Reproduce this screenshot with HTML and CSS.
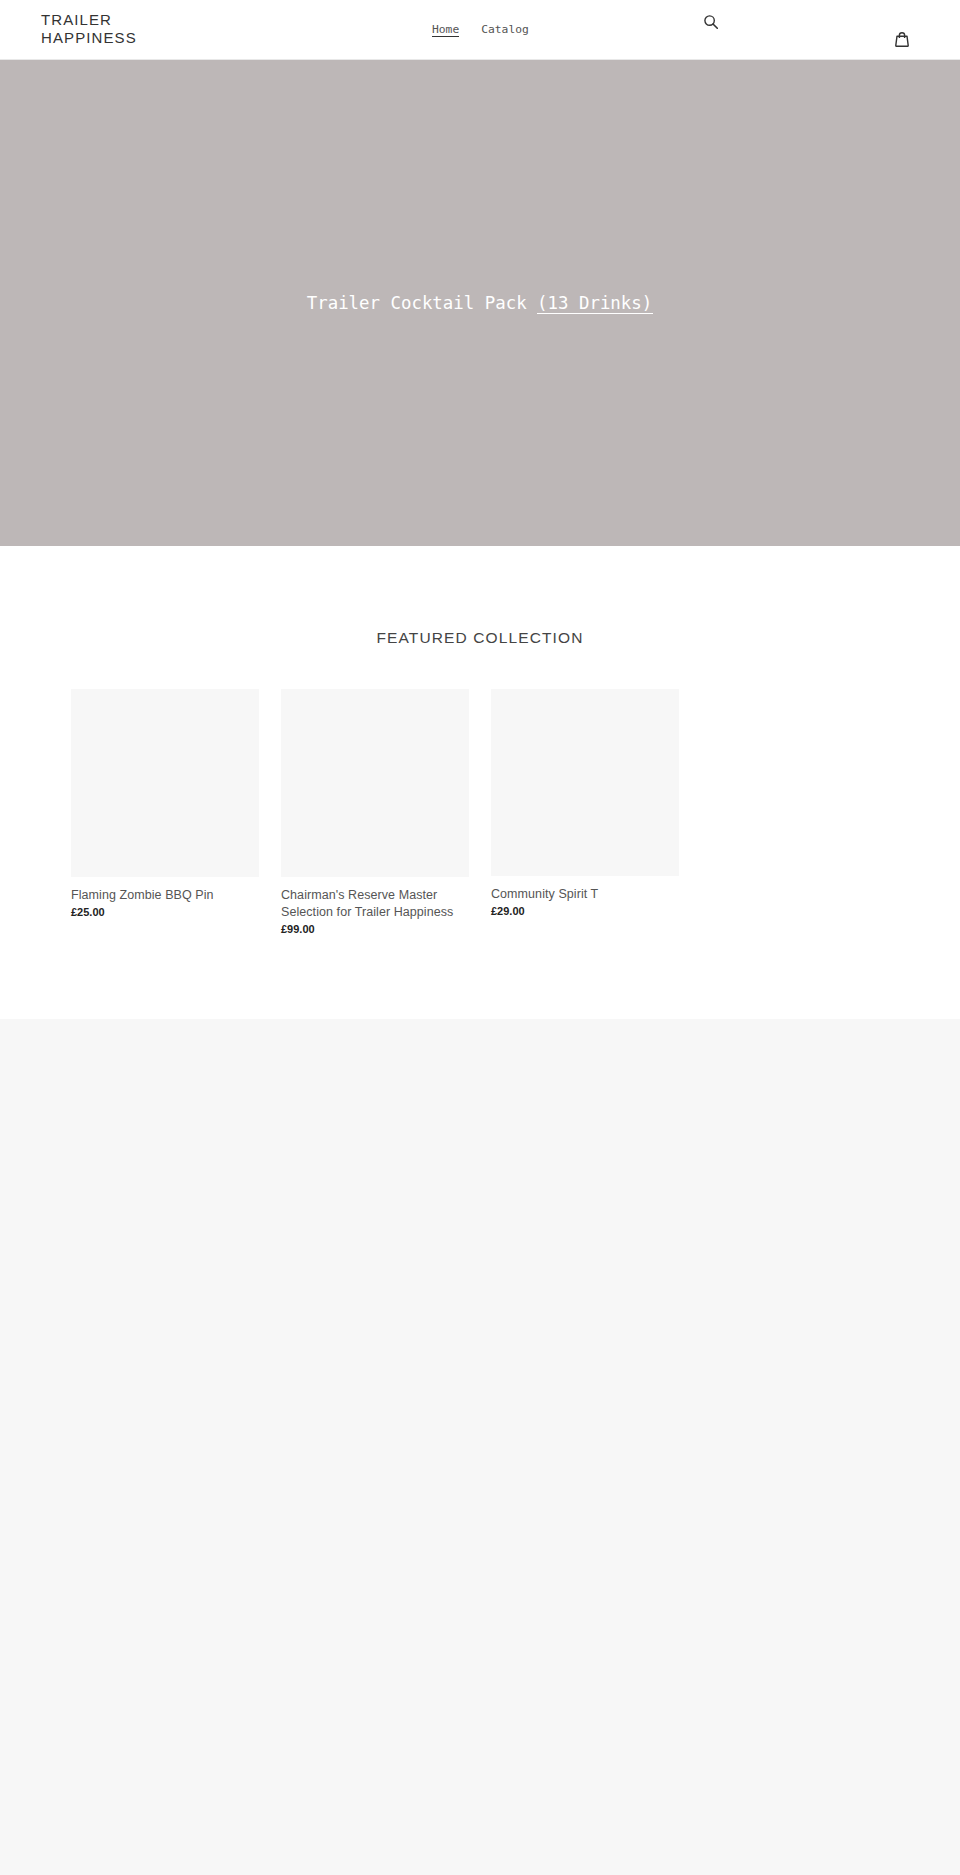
FILE: index.html
```html
<!DOCTYPE html>
<html lang="en">
<head>
    <meta charset="UTF-8">
    <meta name="viewport" content="width=device-width, initial-scale=1.0">
    <title>Trailer Happiness</title>
    <link rel="stylesheet" href="styles.css">
</head>
<body>
    <header class="site-header">
        <a class="logo" href="#">TRAILER<br>HAPPINESS</a>
        <nav class="site-nav">
            <a class="nav-link nav-link-active" href="#">Home</a>
            <a class="nav-link" href="#">Catalog</a>
        </nav>
        <a class="search-link" href="#" aria-label="Search">
            <svg class="icon-search" viewBox="0 0 14 14" fill="none" stroke="#333" stroke-width="1.4">
                <circle cx="5.6" cy="5.6" r="4.7"/>
                <path d="M9 9 L13.3 13.3" stroke-linecap="round" stroke-width="1.6"/>
            </svg>
        </a>
        <a class="cart-link" href="#" aria-label="Cart">
            <svg class="icon-cart" viewBox="0 0 14 15" fill="none" stroke="#333" stroke-width="1.4">
                <path d="M2 4.2 H12 L13.2 13.3 Q13.3 14.3 12.4 14.3 H1.6 Q0.7 14.3 0.8 13.3 Z" stroke-linejoin="round"/>
                <path d="M4.4 6 V3 Q4.4 0.8 7 0.8 Q9.6 0.8 9.6 3 V6"/>
            </svg>
        </a>
    </header>

    <section class="hero">
        <h2 class="hero-title">Trailer Cocktail Pack <a class="hero-link" href="#">(13 Drinks)</a></h2>
    </section>

    <section class="featured">
        <h2 class="section-title">FEATURED COLLECTION</h2>
        <div class="product-grid">
            <a class="product-card" href="#">
                <div class="product-image"></div>
                <div class="product-name">Flaming Zombie BBQ Pin</div>
                <div class="product-price">£25.00</div>
            </a>
            <a class="product-card" href="#">
                <div class="product-image"></div>
                <div class="product-name">Chairman's Reserve Master Selection for Trailer Happiness</div>
                <div class="product-price">£99.00</div>
            </a>
            <a class="product-card product-card-short" href="#">
                <div class="product-image"></div>
                <div class="product-name">Community Spirit T</div>
                <div class="product-price">£29.00</div>
            </a>
        </div>
    </section>

    <footer class="site-footer"></footer>
</body>
</html>
```
FILE: styles.css
```css
body {
    font-family: "Liberation Sans", Arial, sans-serif;
    background-color: #fff;
    color: #3a3a3a;
    margin: 0;
}

a {
    color: inherit;
    text-decoration: none;
}

.site-header {
    display: grid;
    grid-template-columns: 391px 272px 191px 65px;
    height: 59px;
    padding-left: 41px;
    border-bottom: 1px solid #e8e8e8;
}

.logo {
    font-size: 15px;
    line-height: 18px;
    letter-spacing: 1.1px;
    color: #333;
    padding-top: 11px;
}

.site-nav {
    display: flex;
    gap: 22px;
    padding-top: 23px;
}

.nav-link {
    font-family: "DejaVu Sans Mono", monospace;
    font-size: 11.3px;
    line-height: 13px;
    height: 13px;
    color: #555;
}

.nav-link-active {
    border-bottom: 1px solid #333;
}

.search-link {
    padding-top: 15px;
}

.icon-search {
    display: block;
    width: 14px;
    height: 14px;
}

.cart-link {
    padding-top: 32px;
}

.icon-cart {
    display: block;
    width: 14px;
    height: 15px;
}

.hero {
    display: flex;
    align-items: center;
    justify-content: center;
    height: 486px;
    background-color: #bdb7b7;
}

.hero-title {
    font-family: "DejaVu Sans Mono", monospace;
    font-size: 17.4px;
    font-weight: normal;
    color: #fff;
    margin: 0;
}

.hero-link {
    border-bottom: 1px solid #fff;
    padding-right: 1px;
}

.featured {
    padding: 82px 71px 0;
    height: 391px;
}

.section-title {
    font-size: 15.5px;
    font-weight: normal;
    letter-spacing: 1.12px;
    line-height: 20px;
    text-align: center;
    color: #444;
    margin: 0 0 41px;
}

.product-grid {
    display: flex;
    gap: 22px;
}

.product-card {
    display: block;
    width: 188px;
}

.product-image {
    height: 188px;
    background-color: #f7f7f7;
    margin-bottom: 10px;
}

.product-card-short .product-image {
    height: 187px;
}

.product-name {
    font-size: 12.5px;
    line-height: 17px;
    letter-spacing: 0.07px;
    color: #555;
}

.product-price {
    font-size: 11px;
    font-weight: bold;
    line-height: 17px;
    color: #222;
}

.site-footer {
    height: 856px;
    background-color: #f7f7f7;
}
```
